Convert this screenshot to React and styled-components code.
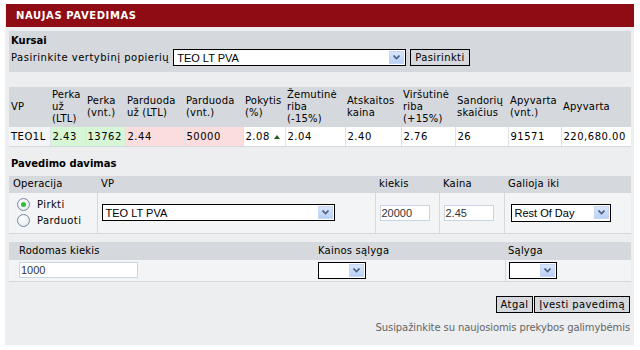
import React from "react";
import styled, { createGlobalStyle } from "styled-components";

const GlobalStyle = createGlobalStyle`
  html, body { margin: 0; padding: 0; background: #ffffff; }
  body { font-family: "DejaVu Sans", Verdana, sans-serif; font-size: 10px; color: #000; }
  * { box-sizing: border-box; }
`;

const Page = styled.div`
  padding: 4px 6px 5px 5px;
`;

const Panel = styled.div`
  width: 629px;
  height: 341px;
  background: #eceef0;
  display: flex;
  flex-direction: column;
`;

const Header = styled.div`
  height: 23px;
  margin-left: 1px;
  background: #8f0c14;
  color: #fff;
  font-weight: bold;
  font-size: 10px;
  letter-spacing: 0.6px;
  display: flex;
  align-items: center;
  padding-left: 10px;
`;

const Body = styled.div`
  padding: 4px 3px 0 4px;
  display: flex;
  flex-direction: column;
`;

const Box = styled.div`
  background: #d5d8dc;
  height: 41px;
  padding: 4px 2px 0 2px;
  display: flex;
  flex-direction: column;
  gap: 3px;
`;

const Bold = styled.div`
  font-weight: bold;
  font-size: 10px;
  margin: ${(p) => p.$m || "0"};
`;

const Row = styled.div`
  display: flex;
  align-items: center;
  gap: ${(p) => p.$gap || 4}px;
  justify-content: ${(p) => p.$justify || "flex-start"};
`;

const SelectBox = styled.div`
  width: ${(p) => p.$w}px;
  height: ${(p) => p.$h || 17}px;
  border: 1px solid #000;
  background: #fff;
  display: flex;
  align-items: center;
  justify-content: space-between;
  padding: 0 1px 0 3px;
  font-family: "Liberation Sans", Arial, sans-serif;
  font-size: 11px;
`;

const ArrowBtn = styled.span`
  width: 15px;
  height: 13px;
  background: linear-gradient(#d9e6fb, #b9d0f6);
  border: 1px solid #c6d6f3;
  display: flex;
  align-items: center;
  justify-content: center;
`;

const Arrow = () => (
  <ArrowBtn>
    <svg width="7" height="5" viewBox="0 0 7 5">
      <path d="M0.5 0.5 L3.5 3.5 L6.5 0.5" stroke="#4d6185" strokeWidth="1.6" fill="none" />
    </svg>
  </ArrowBtn>
);

const Select = ({ w, h, value }) => (
  <SelectBox $w={w} $h={h}>
    <span>{value}</span>
    <Arrow />
  </SelectBox>
);

const Button = styled.button`
  height: 17px;
  border: 1px solid #000;
  background: #d5d8dc;
  font-family: "DejaVu Sans", Verdana, sans-serif;
  font-size: 10px;
  letter-spacing: 0.4px;
  padding: 0 4px;
  color: #000;
  margin: 0;
`;

const Table = styled.table`
  width: 100%;
  border-collapse: collapse;
  margin-top: ${(p) => p.$mt || 0}px;
`;

const Th = styled.th`
  background: #d5d8dc;
  font-weight: normal;
  text-align: left;
  vertical-align: middle;
  padding: ${(p) => p.$pad || "2px 2px"};
  line-height: 12px;
  height: ${(p) => p.$h || "auto"};
  width: ${(p) => (p.$w ? p.$w + "px" : "auto")};
  letter-spacing: 0.2px;
  white-space: pre;
`;

const tone = { g: "#d6f6d6", r: "#fbdddd", w: "#ffffff", n: "#f3f4f5" };

const Td = styled.td`
  background: ${(p) => tone[p.$tone || "w"]};
  padding: 0 2px;
  height: 19px;
  border-left: 1px solid #dfe2e6;
  border-bottom: 1px solid #d5d8dc;
  letter-spacing: 0.5px;
  white-space: nowrap;
  &:first-child { border-left: none; }
`;

const Up = styled.span`
  display: inline-block;
  margin-left: 4px;
  width: 0;
  height: 0;
  border-left: 3px solid transparent;
  border-right: 3px solid transparent;
  border-bottom: 4px solid #1b5e20;
  vertical-align: 1px;
`;

const FCell = styled.td`
  background: #f3f4f5;
  border-left: ${(p) => (p.$noLeft ? "none" : "1px solid #d5d8dc")};
  border-bottom: 1px solid #d5d8dc;
  vertical-align: middle;
  padding: ${(p) => p.$pad || "0 4px"};
  height: ${(p) => p.$h}px;
`;

const Radios = styled.div`
  display: flex;
  flex-direction: column;
  gap: 3px;
  padding-left: 4px;
`;

const RadioLabel = styled.label`
  display: flex;
  align-items: center;
  gap: 7px;
  letter-spacing: 0.4px;
`;

const RadioDot = styled.span`
  width: 13px;
  height: 13px;
  border-radius: 50%;
  border: 1px solid #7a8a9c;
  background: radial-gradient(circle at 40% 35%, #ffffff, #dde3ea);
  display: flex;
  align-items: center;
  justify-content: center;
  &::after {
    content: "";
    width: 5px;
    height: 5px;
    border-radius: 50%;
    background: ${(p) => (p.$on ? "#2fbf3a" : "transparent")};
  }
`;

const TextInput = styled.div`
  width: ${(p) => p.$w}px;
  height: 16px;
  border: 1px solid #c8d6e3;
  background: #fff;
  font-family: "Liberation Sans", Arial, sans-serif;
  font-size: 11px;
  color: #333;
  display: flex;
  align-items: center;
  padding-left: 1px;
`;

const Footer = styled.div`
  text-align: right;
  color: #666;
  letter-spacing: -0.1px;
  margin-top: 9px;
  padding-right: 1px;
`;

const Label = styled.span`
  letter-spacing: 0.5px;
`;

const quotes = [
  ["TEO1L", "n"],
  ["2.43", "g"],
  ["13762", "g"],
  ["2.44", "r"],
  ["50000", "r"],
  ["2.08", "w", true],
  ["2.04", "w"],
  ["2.40", "w"],
  ["2.76", "w"],
  ["26", "w"],
  ["91571", "w"],
  ["220,680.00", "w"],
];

const heads = [
  ["VP", 41],
  ["Perka\nuž\n(LTL)", 35],
  ["Perka\n(vnt.)", 40],
  ["Parduoda\nuž (LTL)", 59],
  ["Parduoda\n(vnt.)", 59],
  ["Pokytis\n(%)", 42],
  ["Žemutinė\nriba\n(-15%)", 60],
  ["Atskaitos\nkaina", 56],
  ["Viršutinė\nriba\n(+15%)", 54],
  ["Sandorių\nskaičius", 53],
  ["Apyvarta\n(vnt.)", 53],
  ["Apyvarta", null],
];

export default function App() {
  return (
    <>
      <GlobalStyle />
      <Page>
        <Panel>
          <Header>NAUJAS PAVEDIMAS</Header>
          <Body>
            <Box>
              <Bold>Kursai</Bold>
              <Row $gap={4}>
                <Label>Pasirinkite vertybinį popierių</Label>
                <Select w={233} value="TEO LT PVA" />
                <Button>Pasirinkti</Button>
              </Row>
            </Box>

            <Table $mt={15}>
              <thead>
                <tr>
                  {heads.map(([h, w], i) => (
                    <Th key={i} $w={w} $h="40px">
                      {h}
                    </Th>
                  ))}
                </tr>
              </thead>
              <tbody>
                <tr>
                  {quotes.map(([v, t, up], i) => (
                    <Td key={i} $tone={t}>
                      {v}
                      {up && <Up />}
                    </Td>
                  ))}
                </tr>
              </tbody>
            </Table>

            <Bold $m="11px 0 0 2px">Pavedimo davimas</Bold>

            <Table $mt={7}>
              <thead>
                <tr>
                  <Th $w={88} $h="17px" $pad="0 4px">Operacija</Th>
                  <Th $w={278} $h="17px" $pad="0 4px">VP</Th>
                  <Th $w={64} $h="17px" $pad="0 4px">kiekis</Th>
                  <Th $w={65} $h="17px" $pad="0 4px">Kaina</Th>
                  <Th $h="17px" $pad="0 4px">Galioja iki</Th>
                </tr>
              </thead>
              <tbody>
                <tr>
                  <FCell $noLeft $h={41}>
                    <Radios>
                      <RadioLabel>
                        <RadioDot $on />
                        Pirkti
                      </RadioLabel>
                      <RadioLabel>
                        <RadioDot />
                        Parduoti
                      </RadioLabel>
                    </Radios>
                  </FCell>
                  <FCell $h={41}>
                    <Select w={233} value="TEO LT PVA" />
                  </FCell>
                  <FCell $h={41}>
                    <TextInput $w={50}>20000</TextInput>
                  </FCell>
                  <FCell $h={41}>
                    <TextInput $w={50}>2.45</TextInput>
                  </FCell>
                  <FCell $h={41} $pad="0 6px">
                    <Select w={100} h={18} value="Rest Of Day" />
                  </FCell>
                </tr>
              </tbody>
            </Table>

            <Table $mt={8}>
              <thead>
                <tr>
                  <Th $w={309} $h="18px" $pad="0 10px">Rodomas kiekis</Th>
                  <Th $w={187} $h="18px" $pad="0 0">Kainos sąlyga</Th>
                  <Th $h="18px" $pad="0 3px">Sąlyga</Th>
                </tr>
              </thead>
              <tbody>
                <tr>
                  <FCell $noLeft $h={21} $pad="0 10px">
                    <TextInput $w={119}>1000</TextInput>
                  </FCell>
                  <FCell $noLeft $h={21} $pad="0">
                    <Select w={48} h={17} value="" />
                  </FCell>
                  <FCell $h={21} $pad="0 3px">
                    <Select w={48} h={17} value="" />
                  </FCell>
                </tr>
              </tbody>
            </Table>

            <Row $gap={1} $justify="flex-end" style={{ marginTop: 14, paddingRight: 1 }}>
              <Button>Atgal</Button>
              <Button>Įvesti pavedimą</Button>
            </Row>
            <Footer>Susipažinkite su naujosiomis prekybos galimybėmis</Footer>
          </Body>
        </Panel>
      </Page>
    </>
  );
}
